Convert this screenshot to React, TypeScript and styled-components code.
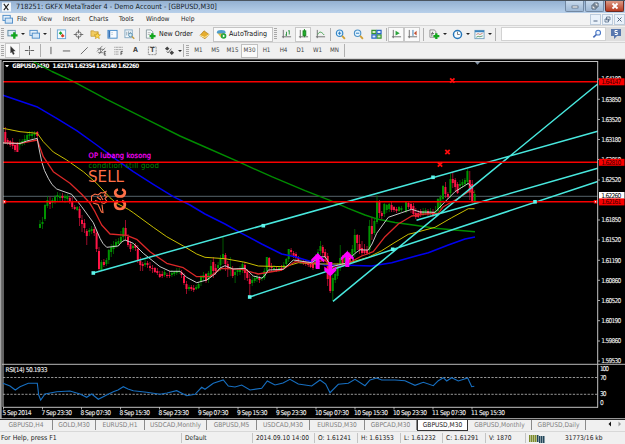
import React from "react";
import styled, { createGlobalStyle } from "styled-components";

type Candle = [number, number, number, number, number, number];

// x, high, body top, body bottom, low, direction (1 up, 0 down)
const candles: Candle[] = [
  [5.3, 127, 132, 142, 144, 0], [7.7, 138, 140, 142, 145, 0], [10.2, 140, 141, 145, 147, 0], [12.7, 138, 142, 146, 149, 0],
  [15, 143, 145, 150, 152, 0], [17.4, 142, 144, 152, 152, 0], [19.8, 139, 142, 145, 150, 1], [22.2, 139, 141, 144, 146, 1],
  [24.7, 135, 139, 142, 145, 1], [27.2, 133, 135, 140, 142, 1], [29.6, 131, 134, 136, 139, 1], [32.1, 131, 134, 136, 139, 1],
  [34.6, 131, 133, 135, 138, 1], [37.3, 131, 132, 136, 138, 0],
  [40, 220, 224, 228, 228, 1], [42.5, 217, 222, 224, 229, 1], [45, 204, 205, 219, 221, 1], [47.4, 196, 200, 206, 208, 1],
  [50, 197, 201, 204, 209, 0], [52.4, 198, 200, 203, 208, 1], [55, 195, 197, 201, 204, 1], [57.4, 192, 195, 197, 201, 1],
  [60, 193, 196, 198, 202, 1], [62.4, 193, 196, 198, 201, 0], [65, 194, 196, 198, 203, 1], [67.3, 194, 196, 199, 202, 1],
  [69.8, 196, 198, 202, 204, 0], [72.2, 197, 201, 207, 209, 0], [74.7, 205, 207, 209, 210, 0], [77.2, 206, 207, 210, 211, 1],
  [79.6, 206, 209, 218, 226, 0], [82, 215, 220, 224, 232, 0], [84.4, 219, 223, 228, 233, 0], [86.8, 229, 231, 236, 245, 0],
  [89.3, 228, 230, 232, 236, 1], [91.7, 226, 229, 231, 234, 1], [94.2, 227, 229, 233, 236, 0], [96.6, 230, 233, 249, 252, 0],
  [99, 247, 251, 269, 271, 0], [101.4, 260, 262, 270, 271, 1], [103.9, 259, 262, 265, 267, 0], [106.4, 258, 260, 264, 266, 1],
  [108.8, 249, 250, 260, 264, 1], [111.2, 244, 247, 252, 257, 1], [113.6, 241, 245, 249, 254, 1], [116, 239, 242, 246, 248, 1],
  [118.4, 238, 241, 244, 246, 1], [120.9, 231, 237, 242, 244, 1], [123.3, 227, 228, 237, 241, 1], [125.6, 220, 228, 236, 240, 0],
  [128, 234, 237, 245, 247, 0], [130.5, 241, 244, 249, 252, 0], [133, 243, 246, 248, 250, 1], [135.4, 243, 245, 248, 251, 0],
  [137.8, 245, 249, 261, 263, 0], [140.3, 257, 261, 265, 271, 0], [142.7, 262, 264, 266, 271, 0], [145.1, 258, 263, 265, 267, 1],
  [147.5, 261, 263, 265, 268, 0], [150, 262, 266, 268, 271, 0], [152.4, 265, 268, 269, 273, 0], [154.9, 267, 268, 272, 273, 0],
  [157.3, 268, 271, 273, 275, 0], [159.8, 271, 274, 277, 278, 0], [162.2, 271, 274, 276, 278, 0], [164.6, 270, 272, 275, 277, 1],
  [167, 273, 275, 276, 278, 0], [169.4, 271, 275, 276, 278, 0], [171.9, 270, 273, 275, 277, 1], [174.3, 271, 272, 274, 276, 1],
  [176.8, 268, 271, 273, 275, 1], [179.2, 268, 271, 272, 274, 1], [181.6, 270, 272, 275, 278, 0], [184, 273, 276, 283, 285, 0],
  [186.5, 281, 284, 289, 294, 0], [189, 285, 287, 289, 291, 1], [191.3, 285, 287, 289, 291, 0], [193.7, 285, 288, 290, 292, 0],
  [196.2, 285, 287, 289, 290, 1], [198.6, 282, 284, 288, 289, 1], [201, 275, 277, 282, 286, 1], [203.5, 272, 275, 278, 281, 1],
  [206, 273, 274, 281, 283, 0], [208.4, 271, 273, 280, 283, 1], [210.9, 260, 266, 275, 278, 1], [213.3, 257, 262, 271, 278, 0],
  [215.7, 264, 268, 271, 275, 0], [218.1, 262, 265, 268, 272, 1], [220.5, 255, 259, 265, 271, 1], [223, 237, 254, 259, 264, 1],
  [225.4, 253, 255, 264, 271, 0], [227.8, 261, 264, 268, 277, 0], [230.3, 257, 267, 269, 276, 1], [232.7, 266, 269, 276, 278, 0],
  [235.1, 269, 272, 275, 283, 1], [237.6, 268, 270, 272, 276, 1], [240, 266, 269, 272, 275, 1], [242.5, 262, 264, 269, 273, 1],
  [244.9, 262, 265, 273, 280, 0], [247.3, 269, 272, 278, 281, 0], [249.8, 274, 279, 284, 296, 0], [252.2, 276, 280, 283, 286, 1],
  [254.7, 276, 278, 281, 283, 1], [257, 275, 277, 279, 282, 1], [259.4, 276, 278, 280, 283, 0], [261.9, 277, 278, 279, 281, 1],
  [264.3, 268, 271, 278, 280, 1], [266.8, 257, 257, 271, 273, 1], [269.2, 257, 258, 267, 272, 0], [271.6, 263, 266, 268, 271, 0],
  [274, 265, 268, 270, 272, 1], [276.5, 267, 269, 271, 272, 0], [279, 266, 268, 270, 272, 1], [281.4, 265, 268, 270, 271, 0],
  [283.8, 262, 265, 268, 270, 1], [286.3, 258, 259, 264, 267, 1], [288.7, 249, 249, 259, 262, 1], [291.1, 248, 250, 252, 256, 0],
  [293.6, 251, 253, 256, 258, 0], [296, 252, 254, 258, 260, 0], [298.4, 256, 258, 261, 263, 0], [300.9, 258, 261, 263, 264, 1],
  [303.3, 259, 261, 263, 265, 0], [305.8, 260, 262, 264, 266, 0], [308.2, 260, 263, 265, 267, 0], [310.6, 261, 264, 267, 268, 0],
  [313, 262, 264, 268, 270, 0], [315.5, 254, 258, 265, 268, 1], [318, 249, 252, 259, 263, 1], [320.4, 241, 246, 251, 255, 1],
  [322.8, 245, 247, 253, 256, 0], [325.2, 249, 252, 257, 262, 0], [327.7, 253, 256, 279, 286, 0], [330.2, 270, 276, 291, 293, 0],
  [332.8, 272, 278, 291, 301, 1], [335.2, 268, 274, 280, 283, 1], [337.6, 263, 267, 276, 279, 1], [340.2, 245, 258, 267, 271, 1],
  [342.6, 255, 257, 263, 266, 0], [345, 253, 256, 262, 264, 1], [347.4, 250, 254, 260, 264, 1], [349.9, 252, 256, 262, 265, 0],
  [352.3, 245, 249, 258, 262, 1], [354.8, 229, 235, 252, 257, 1], [357.2, 234, 235, 243, 250, 0], [359.6, 235, 244, 250, 254, 0],
  [362, 241, 248, 253, 256, 0], [364.5, 244, 250, 253, 254, 0], [367, 246, 250, 253, 255, 0], [369.4, 220, 226, 250, 255, 1],
  [371.9, 217, 226, 234, 240, 0], [374.4, 219, 221, 233, 235, 1], [377, 195, 201, 222, 224, 1], [379.4, 200, 201, 213, 218, 0],
  [381.8, 211, 213, 216, 219, 0], [384.3, 203, 204, 214, 217, 1], [386.8, 204, 205, 210, 213, 1], [389.2, 203, 204, 209, 212, 1],
  [391.6, 202, 205, 210, 212, 0], [394, 206, 207, 210, 212, 0], [396.5, 207, 209, 211, 213, 0], [399, 206, 207, 211, 212, 1],
  [401.4, 206, 208, 210, 212, 1], [406, 201, 202, 211, 213, 1], [408.5, 202, 203, 207, 209, 0], [411, 202, 204, 209, 213, 0],
  [413.4, 203, 206, 214, 216, 0], [415.8, 208, 213, 217, 219, 0], [418.2, 210, 213, 217, 218, 0], [420.7, 209, 211, 215, 217, 0],
  [423.1, 208, 211, 214, 216, 1], [425.6, 208, 210, 213, 215, 1], [428, 209, 211, 214, 216, 0], [430.5, 208, 211, 214, 216, 1],
  [433, 209, 212, 215, 217, 0], [435.4, 206, 211, 214, 216, 1], [437.9, 198, 199, 211, 214, 1], [440.4, 195, 197, 208, 211, 1],
  [443, 185, 186, 199, 201, 1], [445.4, 182, 187, 194, 198, 0], [447.9, 192, 194, 197, 199, 0], [450.4, 174, 179, 193, 198, 1],
  [452.8, 172, 179, 183, 188, 0], [455.2, 178, 180, 187, 191, 0], [457.6, 182, 184, 193, 194, 0], [460, 180, 184, 186, 190, 1],
  [462.4, 179, 182, 185, 188, 1], [464.9, 178, 180, 184, 187, 1], [467.4, 169, 171, 182, 185, 1], [469.8, 171, 180, 192, 200, 0],
  [472.2, 180, 184, 202, 203, 0], [474.7, 190, 194, 203, 204, 1],
];

const averages = [
  { color: "#008c00", w: 1.4, points: "32,61 52,71.5 71.7,80.7 106.7,99.3 146.7,119.3 180,136 205,147 238.3,161.7 271.7,176.7 305,190.7 330,200.3 348.3,208.3 365,215 378.3,219.3 395,222.5 415,225.3 435,228.3 455,230 475,231.7" },
  { color: "#0000f0", w: 1.5, points: "3,95.3 36.7,106.7 56.7,118.3 76.7,130.7 96.7,145 113.3,157.3 133.3,171.7 153.3,184.3 173.3,196.7 190,205 205,214 225,224 241.7,233.3 261.7,244 281.7,254 295,256.7 308.3,260.7 325,265 348,265.3 371.7,266 391.7,262.7 415,256.3 428.3,252.7 448.3,245 465,239 475,237" },
  { color: "#c8be00", w: 1, points: "3,128.3 20,131.7 37.3,133.3 43.3,141.7 53.3,152 66.7,160 83.3,171.7 96.7,183.3 110,197.7 117,203.5 128.3,209.3 133.3,212.7 153.3,227.3 166.7,236.7 183.3,246 196.7,254 205,257.3 225,258.7 245,262.3 258.3,266 285,266.7 298.3,262.7 318.3,264 345,264 368.3,257.3 381.7,250.7 395,242.3 408.3,234.3 415,232.7 435,227.3 451.7,217.7 468.3,208.7 474.5,208.7" },
  { color: "#dc2828", w: 1.3, points: "3,142.7 20,143.3 37.3,140 43.3,156.7 53.3,171.7 70,183.3 81.7,194.3 90,203.3 95,211.7 101.7,225 110,234 126.7,235.3 136.7,239.3 150,251.7 166.7,263.3 183.3,267.7 196.7,276.7 210,276.3 221.7,268.3 241.7,269.3 258.3,274 281.7,270 295,261.7 311.7,263.3 325,260 333.3,268.3 345,265 361.7,256 373.3,251.7 385,236.7 398.3,224 411.7,216 425,214 438.3,213.3 443.3,206.7 458.3,198.3 468.3,191.7 474.3,192.3" },
  { color: "#d4d4d4", w: 0.95, points: "3,143 20,143.5 26.7,141 37.3,138.3 38.5,146 41.7,161.7 44.5,170.5 48.3,178.3 52,184.5 56.7,189 65,192 71.7,194.3 81.7,206.7 93.3,222.7 100,238.3 103,243.5 106.7,247.3 118.3,246 121.5,242 125,240 133.3,243.3 143.3,253.3 160,266.7 170,271.3 180,271.3 186.7,277.3 196.7,282.7 206.7,280 215,274 220,268 225,265.7 233,269 245,268.3 253.3,276 261.7,278 264.5,276 268.3,270 283.3,269.3 288,265 293.3,260 311.7,262.7 320,257 325,256.7 331.7,266.7 345,263.3 355,253.3 360,249.8 368.3,250 372,244 376.7,233.3 388.3,217.3 401.7,212.7 411.7,209.3 420,212 435,212.3 446.7,200 455,191.7 468.3,183.3 472.3,188.3" },
];

const rsiPoints =
  "3,383.3 10,386 15.3,390 20,386.7 28.3,383.3 37.3,383.3 38.7,395 40.7,400 45,394 56.7,391.7 70,391 80,394 86.7,397.3 91.7,394 98.3,399.3 106.7,395 113.3,391.7 118,390 123.3,386.7 128,389 133.3,390.7 146.7,392.3 160,394.3 167,393 176.7,390.7 186.7,395.7 195,394.3 201.7,387.3 205,389.3 213.3,383.3 223.3,380 228.3,386 235,387 241.7,385 250,390 261.7,388.3 267.3,381 275,385 283,383 290,379.3 298.3,384 311.7,386 320,380 325.7,384 330,392.7 338.3,384.3 348.3,383.3 355,379.3 365,385.7 370,380 376.7,378 381.7,380 395,380 405,380.7 415,385.3 423.3,382.3 433.3,385.7 438.3,380.7 443.3,377.7 446.7,381 451.7,377.7 458.3,381 467.7,378 471.7,386.7 474.3,386.3";

const prices: [string, number][] = [
  ["1.64180", 79], ["1.63850", 99.3], ["1.63520", 119.5], ["1.63180", 139.5], ["1.62850", 159.5], ["1.62520", 180],
  ["1.61850", 220], ["1.61520", 240], ["1.61190", 260.3], ["1.60860", 280.3], ["1.60520", 300.5], ["1.60190", 320.7],
  ["1.59860", 341], ["1.59530", 361],
];

const levels: [string, number][] = [["1.64147", 81.7], ["1.62810", 162.2], ["1.62161", 201.8]];

const times: [string, number, number][] = [
  ["5 Sep 2014", 2.5, 29], ["7 Sep 23:30", 41.5, 30.5], ["8 Sep 07:30", 80.5, 30.5], ["8 Sep 15:30", 119.5, 30.5],
  ["8 Sep 23:30", 158.5, 30.5], ["9 Sep 07:30", 198, 30.5], ["9 Sep 15:30", 237, 30.5], ["9 Sep 23:30", 276, 30.5],
  ["10 Sep 07:30", 315, 34], ["10 Sep 15:30", 354, 34], ["10 Sep 23:30", 393, 34], ["11 Sep 07:30", 432, 34],
  ["11 Sep 15:30", 471, 34],
];

const menus: [string, number][] = [
  ["File", 21], ["View", 25], ["Insert", 26], ["Charts", 30], ["Tools", 27], ["Window", 35], ["Help", 20],
];

const periods = ["M1", "M5", "M15", "M30", "H1", "H4", "D1", "W1", "MN"];

const tabs: [string, number][] = [
  ["GBPUSD,H4", 53], ["GOLD,M30", 43], ["EURUSD,H1", 49], ["USDCAD,Monthly", 62], ["GBPUSD,M5", 50], ["USDCAD,M30", 53],
  ["EURUSD,M30", 55], ["GBPCAD,M30", 52], ["GBPUSD,M30", 51], ["GBPUSD,Monthly", 64], ["GBPUSD,Daily", 54],
];

const status: [string, number][] = [
  ["For Help, press F1", 182], ["Default", 71], ["2014.09.10 14:00", 62], ["O: 1.61241", 43], ["H: 1.61353", 43],
  ["L: 1.61232", 42], ["C: 1.61291", 43], ["V: 1870", 40],
];

const Axes = () => <path d="M2.5 1v9M1 8.5h10" stroke="#6b6b6b" fill="none" />;

const icons: Record<string, React.ReactNode> = {
  newChart: <><rect x="1" y="1.5" width="8" height="6" fill="#dcebf5" stroke="#5b86a0" /><path d="M8 3.5v7M4.5 7h7" stroke="#11a51b" strokeWidth="2.6" /></>,
  profiles: <><rect x="1" y="1.5" width="8" height="5.5" fill="#e5f0fa" stroke="#4c8bc7" /><rect x="3.5" y="4.5" width="8" height="5.5" fill="#d4e7f8" stroke="#4c8bc7" /></>,
  market: <><rect x="1.5" y="1" width="9" height="9.5" fill="#f4faff" stroke="#66a4d3" /><path d="M3 4.7 5 2.5 7 4.7 5 6.6z" fill="#18a32a" /><path d="M5.2 7.5 7.2 5.3 9.4 7.5 7.2 9.4z" fill="#d83c20" /></>,
  target: <><circle cx="6" cy="6" r="3" fill="none" stroke="#666" /><path d="M6 .8v4M6 7.2v4M.8 6h4M7.2 6h4" stroke="#666" /></>,
  folder: <><path d="M1 2h3l1 1h4v5H1z" fill="#f2cc62" stroke="#bc8f27" strokeWidth=".7" /><path d="m8 4 1 2.2 2.4.2-1.8 1.5.6 2.6L8 9.2 5.800 10.500l.6-2.600-1.800-1.500L7 6.200z" fill="#ffd84a" stroke="#b98a12" strokeWidth=".6" /></>,
  terminal: <><rect x="1" y="1.5" width="10" height="8.5" fill="#f8fbff" stroke="#3d86c9" /><path d="M2.5 2v7.5" stroke="#3471b6" strokeWidth="2" /><path d="M5 4h1M5 6h1" stroke="#8ab" /></>,
  tester: <><rect x="1" y="1" width="8" height="8.5" fill="#f3f8fc" stroke="#83a8c2" /><path d="M3 3v4M5 2.5v3M7 3v3" stroke="#718c9e" strokeWidth=".8" /><circle cx="7" cy="6.5" r="2" fill="#d7ecf6" stroke="#598fae" /><path d="m8.7 8 2.5 2.7" stroke="#c49a38" strokeWidth="1.4" /></>,
  order: <><path d="M1.5 1h5l2 2v7h-7z" fill="#f5f9fa" stroke="#70838c" strokeWidth=".8" /><path d="M3 4h3M3 6h3" stroke="#888" strokeWidth=".6" /><path d="M8 4.5v6.5M5 7.8h6.5" stroke="#12a71c" strokeWidth="2.6" /></>,
  book: <><path d="m1 7 4.5-5 5.5 4-4.5 4.7z" fill="#e5ad2f" stroke="#ab781c" strokeWidth=".7" /><path d="m1 7 5.3 2.2L11 6" fill="none" stroke="#fff0ac" /></>,
  auto: <><ellipse cx="5.7" cy="3.5" rx="4.7" ry="2.3" fill="#4e9dcc" /><path d="M2 5h7l-3 5z" fill="#e5bc3c" /><circle cx="8.3" cy="7.7" r="3" fill="#23a638" /><path d="m7.4 6.1 2.6 1.6-2.6 1.6z" fill="#fff" /></>,
  bars: <><Axes /><path d="M6 3v4.5M4.7 6.5H6M9 1.5V6M7.8 2H9" stroke="#25913a" fill="none" /></>,
  candle: <><Axes /><path d="M7 0v9" stroke="#16861d" /><rect x="5.5" y="2" width="3" height="5" fill="#20ae2c" stroke="#16861d" /></>,
  curve: <><Axes /><path d="M3 6c2-4 4-3 7 .5" stroke="#3b9b46" fill="none" /></>,
  zoomIn: <><circle cx="5" cy="4.6" r="3.5" fill="#e2f4ff" stroke="#3587c8" strokeWidth="1.3" /><path d="m7.8 7.5 3 3.2" stroke="#d1a034" strokeWidth="2" /><path d="M3.2 4.6h3.6M5 2.8v3.6" stroke="#2275bb" /></>,
  zoomOut: <><circle cx="5" cy="4.6" r="3.5" fill="#e2f4ff" stroke="#4c91c7" strokeWidth="1.2" /><path d="m7.8 7.5 3 3.2" stroke="#d1a034" strokeWidth="2" /><path d="M3.2 4.6h3.6" stroke="#2275bb" /></>,
  tiles: <><path d="M1 1.5h4.5V5H1zM6.5 6.5H11V10H6.5z" fill="#d6edc9" stroke="#35942e" strokeWidth="1.3" /><path d="M6.5 1.5H11V5H6.5zM1 6.5h4.5V10H1z" fill="#dce8fb" stroke="#2865c4" strokeWidth="1.3" /></>,
  scroll: <><Axes /><path d="m5 2 4.5 2.5L5 7z" fill="#2aa43a" /></>,
  shift: <><Axes /><path d="M6.5 1v6.5" stroke="#3478ad" /><path d="m10.5 2-3 2.5 3 2.5z" fill="#c35030" /></>,
  indicator: <><path d="M1 1h5l1.5 2v6H1z" fill="#f4f4f4" stroke="#777" strokeWidth=".8" /><path d="M4 3q-1 2-1 5M2.5 5h3" stroke="#666" fill="none" /><path d="M8 4.5v6.5M4.8 7.8h6.5" stroke="#12a71c" strokeWidth="2.5" /></>,
  clock: <><circle cx="6" cy="6" r="4.4" fill="#f8fcff" stroke="#2475b9" strokeWidth="1.6" /><path d="M6 3v3h2.5" stroke="#555" fill="none" strokeWidth=".8" /></>,
  template: <><rect x="1" y="1.5" width="10" height="9" fill="#f3f8fb" stroke="#76a2bf" /><path d="M1 2.5h10" stroke="#3984bf" strokeWidth="2" /><path d="m2.5 6 2-1 2 1 3-1.5" stroke="#bd664b" fill="none" strokeWidth=".8" /><path d="m2.5 9 2-1 2 .5 3-1" stroke="#328443" fill="none" strokeWidth=".8" /></>,
  cursor: <path d="m4 1.5 5 5-2.3.1L8 9.7l-1.4.7-1.3-3L4 8.7z" fill="#333" stroke="#333" strokeWidth=".4" />,
  cross: <path d="M6 1v4M6 7v4M1 6h4M7 6h4M5.500 6h1" stroke="#555" />,
  vline: <path d="M6.500 2v8" stroke="#555" />,
  hline: <path d="M2 6.500h8" stroke="#555" />,
  slant: <path d="m2 10 7.500-7.500" stroke="#555" strokeWidth=".9" />,
  channel: <><path d="m1 7 6-6M3 10l7-7M1.500 4 9 5M2 8l6 .5M5 3v6" stroke="#666" strokeWidth=".8" /><path d="M11 7H9v4h2M9 9h1.600" stroke="#333" strokeWidth=".8" fill="none" /></>,
  fibo: <><path d="M1.500 2.500h9M1.500 5h9M1.500 7.500h5M1.500 10h5" stroke="#777" strokeDasharray="1 .6" strokeWidth=".9" /><path d="M10.700 7H8.700v4M8.700 9h1.600" stroke="#333" strokeWidth=".8" fill="none" /></>,
  textBox: <rect x="1.5" y="2" width="8.5" height="8.5" fill="none" stroke="#777" strokeDasharray="1 .7" />,
  arrows: <><path d="m1 4 2.500-2.500L6 4 3.500 6zM6 8.500 8.500 6 11 8.500 8.500 11z" fill="#444" /><path d="m3 7 1.400 1.600L8 4" stroke="#555" fill="none" /></>,
  search: <><circle cx="6.700" cy="4" r="2.600" fill="#eef6ff" stroke="#4b78c7" strokeWidth="1.200" /><path d="M4.800 6 1.500 9.200" stroke="#4369b4" strokeWidth="1.800" /></>,
};

const Icon = ({ name }: { name: string }) => (
  <Glyph viewBox="0 0 12 12">{icons[name]}</Glyph>
);

const X = ({ x, y }: { x: number; y: number }) => (
  <path d={`M${x - 2.2} ${y - 2.2}l4.4 4.4m0-4.4l-4.4 4.4`} stroke="#ff0c0c" strokeWidth="1.8" />
);

const Chart = () => (
  <ChartArea viewBox="0 59 625 361">
    <rect y="59" width="625" height="361" fill="#000" />
    <path d="M0 59.5h625" stroke="#555" />
    <path d="M.5 60v359" stroke="#a5a5a5" />
    <path d="M1.5 60v359" stroke="#707070" />

    <g fill="#fff">
      <path d="M5 65h4l-2 2.2z" />
      <text x="12.3" y="68.4" textLength="37" fontWeight="bold" fontSize="6.2">GBPUSD,M30</text>
      <text x="52.5" y="68.4" textLength="86.5" fontWeight="bold" fontSize="6.2">1.62174 1.62354 1.62140 1.62260</text>
    </g>

    <path d="M3 196.3h595" stroke="#55636b" />
    {candles.map(([x, high, top, bottom, low, up]) => (
      <g key={x} fill={up ? "#009400" : "#ff1446"}>
        <rect x={x - 0.4} y={high} width=".8" height={low - high} opacity=".75" />
        <rect x={x - 1} y={top} width="2" height={bottom - top} />
      </g>
    ))}
    {averages.map((line) => (
      <polyline key={line.color} points={line.points} stroke={line.color} fill="none" strokeWidth={line.w} strokeLinejoin="round" />
    ))}

    <g fontFamily="'DejaVu Sans Condensed', 'DejaVu Sans', sans-serif">
      <text x="88.5" y="158" fontSize="7.4" fill="#f0f" textLength="62.5" stroke="#f0f" strokeWidth=".2">OP lubang kosong</text>
      <text x="88.5" y="168.4" fontSize="7.8" fill="#008800" textLength="70.5">condition still good</text>
      <text x="88" y="182" fontSize="16.4" fill="#ff7048" textLength="36" lengthAdjust="spacingAndGlyphs">SELL</text>
    </g>
    <g stroke="#ff7048" fill="none">
      <path d="M91.500 201.500v-5.500l3.500-2 3 1 3-2.500 2 .5 3-1.500-1.500 4 2.500 1-2 2 2 3-3 2-3-1M97 197l4 3M100 195l3 5M95 200.500l5 1.500M93 203l5 1.500 3.500 7.500 1.500.5-1-8" strokeWidth="1.100" />
      <path d="M118 189.500c-4.500 1-3.500 7 2 7s6.500-6 2-7M118 201c-4.500 1.500-3.500 8 2 8s6.500-6.500 2-8" strokeWidth="2.700" />
    </g>

    <path
      d="M93.300 273 597.700 131.300M249.700 297 597.700 181.500M333 301.300 597.700 84M416.500 220.300 597.700 168.300"
      stroke="#48e8de"
      strokeWidth="1.500"
    />
    <path d="M3 81.700h595M3 162.200h595M3 201.800h595" stroke="#fa0000" strokeWidth="1.500" />
    {[[93.3, 273], [263.3, 225.7], [433, 177.3], [249.7, 297], [392.7, 249.3], [535, 201.8]].map(([x, y]) => (
      <rect key={x} x={x - 1.8} y={y - 1.8} width="3.600" height="3.600" fill="#5ff5ec" />
    ))}
    {[4.5, 595.5].map((x) => (
      <rect key={x} x={x - 1.2} y="200.600" width="2.400" height="2.400" fill="#fff" stroke="#fa0000" />
    ))}
    <g fill="#f0f">
      <path d="m317.700 253 6.500 6.500v3l-4.500-3.500v10h-4v-10l-4.500 3.500v-3z" />
      <path d="m347.300 251 6.500 6.500v3l-4.500-3.500v10h-4v-10l-4.500 3.500v-3z" />
      <path d="m330.300 276.500-6-6v-4l4 3v-7.500h4v7.500l4-3v4z" />
    </g>
    <X x={452.3} y={80.5} />
    <X x={447.5} y={152} />
    <X x={440} y={164.5} />

    <path d="M3 407V61.500h595M597.700 61v346.500" stroke="#c4c4c4" fill="none" />
    <path d="M475 62h5l-2.500 2.800z" fill="#8292a5" />
    <path d="M2 364.300h623" stroke="#bababa" />
    <path d="M3 377.500h594M3 394.300h594" stroke="#bbb" strokeWidth=".8" strokeDasharray="2.300 1.400" />
    <polyline points={rsiPoints} fill="none" stroke="#176fc1" strokeWidth="1.100" />
    <path d="M3 407.300h595" stroke="#c4c4c4" />

    <g fill="#eee" fontSize="6.600" stroke="#eee" strokeWidth=".1">
      <text x="5.500" y="372" textLength="42">RSI(14) 50.1933</text>
      {prices.map(([label, y]) => (
        <g key={label}>
          <path d={`M598 ${y}h2`} stroke="#ccc" strokeWidth=".8" />
          <text x="601.300" y={y + 2.4} textLength="20">{label}</text>
        </g>
      ))}
      <text x="600" y="371" textLength="9">100</text>
      <text x="600" y="380" textLength="6.500">70</text>
      <text x="600" y="396" textLength="6.500">30</text>
      <text x="600" y="405.300">0</text>
      {times.map(([label, x, w]) => (
        <g key={label}>
          <path d={`M${x + 1} 407v2.500`} stroke="#ccc" strokeWidth=".8" />
          <text x={x} y="415.200" textLength={w}>{label}</text>
        </g>
      ))}
    </g>
    <g fontSize="6.600">
      <rect x="599" y="192" width="25.500" height="7" fill="#fff" />
      <text x="601.300" y="197.700" textLength="20" fill="#000">1.62260</text>
      {levels.map(([label, y]) => (
        <g key={label}>
          <rect x="599" y={y - 3.4} width="25.500" height="7" fill="#fa0000" />
          <text x="601.300" y={y + 2.6} textLength="20" fill="#400000">{label}</text>
        </g>
      ))}
    </g>
    <path d="M0 418.700h625" stroke="#bbb" />
  </ChartArea>
);

const App = () => {
  return (
    <Window>
      <Global />
      <TitleBar>
        <Logo viewBox="0 0 10 10">
          <rect width="10" height="10" fill="#f4f8fb" />
          <path d="m2 1.500 5 7M7.500 1.500 2 8.500" stroke="#222" strokeWidth="1.200" />
        </Logo>
        <Title>718251: GKFX MetaTrader 4 - Demo Account - [GBPUSD,M30]</Title>
        <WindowButton>
          <svg width="8" height="8"><rect x="1" y="4" width="6" height="2" fill="#fff" stroke="#4f6074" strokeWidth=".7" /></svg>
        </WindowButton>
        <WindowButton>
          <svg width="8" height="8"><path d="M3 1h4v4H3zM1 3h4v4H1z" fill="#eee" stroke="#4f6074" /></svg>
        </WindowButton>
        <WindowButton $close>
          <svg width="8" height="8"><path d="m1.500 1.500 5 5m0-5-5 5" stroke="#fff" strokeWidth="1.800" /></svg>
        </WindowButton>
      </TitleBar>

      <MenuBar>
        <MenuIcon><Icon name="profiles" /></MenuIcon>
        {menus.map(([label, w]) => (
          <MenuItem key={label} $w={w}>{label}</MenuItem>
        ))}
        <Fill />
        <ChildButton><svg width="7" height="7"><path d="M1.500 5h4" stroke="#526783" /></svg></ChildButton>
        <ChildButton><svg width="7" height="7"><path d="M2.500 1h3.500v3H2.500zM1 3h3.500v3H1z" fill="#eef4fa" stroke="#526783" strokeWidth=".8" /></svg></ChildButton>
        <ChildButton><svg width="7" height="7"><path d="m1.500 1.500 4 4m0-4-4 4" stroke="#526783" /></svg></ChildButton>
      </MenuBar>

      <Toolbar $h={17}>
        <Grip />
        <Tool $w={15}><Icon name="newChart" /></Tool><Caret />
        <Tool $w={15}><Icon name="profiles" /></Tool><Caret />
        <Divider />
        <Tool $w={19}><Icon name="market" /></Tool>
        <Tool $w={15}><Icon name="target" /></Tool>
        <Tool $w={18}><Icon name="folder" /></Tool>
        <Tool $w={17}><Icon name="terminal" /></Tool>
        <Tool $w={17}><Icon name="tester" /></Tool>
        <Divider />
        <Tool $w={18}><Icon name="order" /></Tool>
        <ToolText $w={36}>New Order</ToolText>
        <Tool $w={18}><Icon name="book" /></Tool>
        <AutoButton><Icon name="auto" />AutoTrading</AutoButton>
        <Grip />
        <Tool $w={17}><Icon name="bars" /></Tool>
        <Tool $w={16} $on><Icon name="candle" /></Tool>
        <Tool $w={18}><Icon name="curve" /></Tool>
        <Divider />
        <Tool $w={17}><Icon name="zoomIn" /></Tool>
        <Tool $w={18}><Icon name="zoomOut" /></Tool>
        <Tool $w={18}><Icon name="tiles" /></Tool>
        <Divider />
        <Tool $w={16} $on><Icon name="scroll" /></Tool>
        <Tool $w={16} $on><Icon name="shift" /></Tool>
        <Divider $gap={3} />
        <Tool $w={15}><Icon name="indicator" /></Tool><Caret />
        <Tool $w={16}><Icon name="clock" /></Tool><Caret />
        <Tool $w={15}><Icon name="template" /></Tool><Caret />
        <Divider />
        <SearchBox><Icon name="search" /></SearchBox>
        <Chat>
          <svg width="12" height="12"><path d="M1 1h10v7H7l-3 3V8H1z" fill="#5877ae" /><path d="M7.500 2.500H5v2h2.300v2H4.800" stroke="#fff" fill="none" /></svg>
        </Chat>
      </Toolbar>

      <Toolbar $h={16}>
        <Grip />
        <Tool $w={15} $on><Icon name="cursor" /></Tool>
        <Tool $w={19}><Icon name="cross" /></Tool>
        <Divider />
        <Tool $w={16}><Icon name="vline" /></Tool>
        <Tool $w={17}><Icon name="hline" /></Tool>
        <Tool $w={18}><Icon name="slant" /></Tool>
        <Tool $w={17}><Icon name="channel" /></Tool>
        <Tool $w={17}><Icon name="fibo" /></Tool>
        <Tool $w={17}><Letter>A</Letter></Tool>
        <Tool $w={17}>
          <TextTool><Icon name="textBox" /><Letter>T</Letter></TextTool>
        </Tool>
        <Tool $w={16}><Icon name="arrows" /></Tool><Caret $w={5} />
        <Divider />
        <Grip />
        {periods.map((p) => (
          <Period key={p} $on={p === "M30"}>{p}</Period>
        ))}
        <Divider />
      </Toolbar>

      <Chart />

      <TabBar>
        {tabs.map(([label, w]) => (
          <Tab key={label} $w={w} $active={label === "GBPUSD,M30"}>{label}</Tab>
        ))}
        <Fill />
        <TabArrows>
          <svg width="16" height="8"><path d="M4 1.500v5L1.500 4z" fill="#111" /><path d="M11.500 1.500v5L14 4z" fill="#999" /></svg>
        </TabArrows>
      </TabBar>

      <StatusBar>
        {status.map(([label, w]) => (
          <StatusCell key={label} $w={w}>{label}</StatusCell>
        ))}
        <Signal>
          <svg width="16" height="9">
            {[0, 1, 2, 3, 4, 5, 6, 7].map((i) => (
              <rect key={i} x={i * 2} y={i < 5 ? 1 : 2} width="1.500" height="7" fill={i < 4 ? "#7d8b2b" : "#23475a"} />
            ))}
          </svg>
        </Signal>
        <span>31773/16 kb</span>
      </StatusBar>
    </Window>
  );
};

export default App;

const Global = createGlobalStyle`
  * {
    box-sizing: border-box;
  }

  body {
    margin: 0;
    overflow: hidden;
    background: #f0f0f0;
  }
`;

const Window = styled.div`
  width: 625px;
  height: 444px;
  display: flex;
  flex-direction: column;
  overflow: hidden;
  background: #f0f0f0;
  color: #222;
  font-family: "DejaVu Sans Condensed", "DejaVu Sans", sans-serif;
  font-size: 6.6px;
  line-height: 1;
  white-space: nowrap;
`;

const TitleBar = styled.div`
  height: 13px;
  flex: none;
  display: flex;
  align-items: center;
  gap: 1px;
  padding: 0 1px 0 2px;
  border-top: 1px solid #4b5560;
  background: linear-gradient(#94b1d2, #b8d0ea);
`;

const Logo = styled.svg`
  width: 9px;
  height: 10px;
`;

const Title = styled.div`
  flex: 1;
  padding-left: 4px;
  color: #141c28;
  font-size: 7.25px;
`;

const WindowButton = styled.div<{ $close?: boolean }>`
  width: 19px;
  height: 11px;
  display: flex;
  align-items: center;
  justify-content: center;
  align-self: flex-start;
  border: 1px solid ${({ $close }) => ($close ? "#6b2a22" : "#7288a2")};
  border-top: none;
  border-radius: 0 0 2px 2px;
  background: ${({ $close }) =>
    $close ? "linear-gradient(#dc9a86, #b83a20)" : "linear-gradient(#c7d9ec, #9eb8d5)"};
`;

const MenuBar = styled.div`
  height: 13px;
  flex: none;
  display: flex;
  align-items: center;
  border-bottom: 1px solid #d5d5d5;
  background: #f3f3f3;
`;

const MenuIcon = styled.div`
  width: 17px;
  padding-left: 2px;
  display: flex;
`;

const MenuItem = styled.div<{ $w: number }>`
  width: ${({ $w }) => $w}px;
`;

const Fill = styled.div`
  flex: 1;
`;

const ChildButton = styled.div`
  width: 11px;
  height: 11px;
  margin-right: 1px;
  display: flex;
  align-items: center;
  justify-content: center;
  border: 1px solid #bccbdc;
  background: #eaf2fb;

  &:last-child {
    margin-right: 0;
  }
`;

const Toolbar = styled.div<{ $h: number }>`
  height: ${({ $h }) => $h}px;
  flex: none;
  display: flex;
  align-items: center;
  border-bottom: 1px solid #d4d4d4;
`;

const Grip = styled.div`
  width: 3px;
  height: 12px;
  margin: 0 1px;
  flex: none;
  background: repeating-linear-gradient(#a8a8a8 0 1px, #eee 1px 2px);
`;

const Divider = styled.div<{ $gap?: number }>`
  width: 1px;
  height: 13px;
  margin: 0 ${({ $gap }) => $gap ?? 1}px;
  flex: none;
  background: #b0b0b0;
`;

const Tool = styled.div<{ $w: number; $on?: boolean }>`
  width: ${({ $w }) => $w}px;
  height: 15px;
  flex: none;
  display: flex;
  align-items: center;
  justify-content: center;
  background: ${({ $on }) => ($on ? "#fafafa" : "none")};
  box-shadow: ${({ $on }) => ($on ? "inset 0 0 0 1px #c8c8c8" : "none")};
`;

const Glyph = styled.svg`
  width: 11px;
  height: 11px;
  flex: none;
`;

const Caret = styled.div<{ $w?: number }>`
  width: ${({ $w }) => $w ?? 7}px;
  flex: none;

  &::after {
    content: "";
    display: block;
    width: 0;
    margin-left: 1px;
    border: 2px solid transparent;
    border-top-color: #222;
    border-bottom: none;
  }
`;

const ToolText = styled.div<{ $w: number }>`
  width: ${({ $w }) => $w}px;
  flex: none;
  color: #111;
  font-size: 7px;
`;

const AutoButton = styled.div`
  width: 60px;
  height: 15px;
  padding-left: 2px;
  flex: none;
  display: flex;
  align-items: center;
  gap: 2px;
  border: 1px solid #c4c4c4;
  background: #fafafa;
  color: #111;
  font-size: 7.1px;
`;

const SearchBox = styled.div`
  width: 105px;
  height: 14px;
  margin-left: 4px;
  padding-right: 2px;
  flex: none;
  display: flex;
  align-items: center;
  justify-content: flex-end;
  border: 1px solid #d2d2d2;
  background: #fff;
`;

const Chat = styled.div`
  flex: 1;
  height: 14px;
  display: flex;
  align-items: center;
  justify-content: center;
  background: #dedede;
`;

const Letter = styled.span`
  color: #444;
  font-size: 7px;
  font-weight: bold;
`;

const TextTool = styled.div`
  display: grid;
  place-items: center;

  > * {
    grid-area: 1 / 1;
  }
`;

const Period = styled.div<{ $on: boolean }>`
  width: 17px;
  height: 14px;
  flex: none;
  display: flex;
  align-items: center;
  justify-content: center;
  color: #444;
  font-size: 6.2px;
  background: ${({ $on }) => ($on ? "#fafafa" : "none")};
  box-shadow: ${({ $on }) => ($on ? "inset 0 0 0 1px #c0c0c0" : "none")};
`;

const ChartArea = styled.svg`
  width: 625px;
  height: 361px;
  flex: none;
  display: block;
`;

const TabBar = styled.div`
  height: 12px;
  flex: none;
  display: flex;
  align-items: flex-start;
  border-bottom: 1px solid #d8d8d8;
`;

const Tab = styled.div<{ $w: number; $active: boolean }>`
  width: ${({ $w }) => $w}px;
  height: ${({ $active }) => ($active ? 11 : 10)}px;
  flex: none;
  display: flex;
  align-items: center;
  justify-content: center;
  color: ${({ $active }) => ($active ? "#222" : "#808080")};
  background: ${({ $active }) => ($active ? "#fff" : "none")};
  border: ${({ $active }) => ($active ? "1px solid #333" : "none")};
  border-top: none;
  border-right: 1px solid ${({ $active }) => ($active ? "#333" : "#8a8a8a")};
`;

const TabArrows = styled.div`
  margin-right: 2px;
`;

const StatusBar = styled.div`
  height: 12px;
  flex: none;
  display: flex;
  align-items: center;
  color: #222;
`;

const StatusCell = styled.div<{ $w: number }>`
  width: ${({ $w }) => $w}px;
  height: 10px;
  padding-left: 3px;
  flex: none;
  display: flex;
  align-items: center;
  border-right: 1px solid #c4c4c4;

  &:first-child {
    padding-left: 1px;
    font-size: 6.9px;
  }
`;

const Signal = styled.div`
  width: 39px;
  padding-left: 3px;
  display: flex;
`;
